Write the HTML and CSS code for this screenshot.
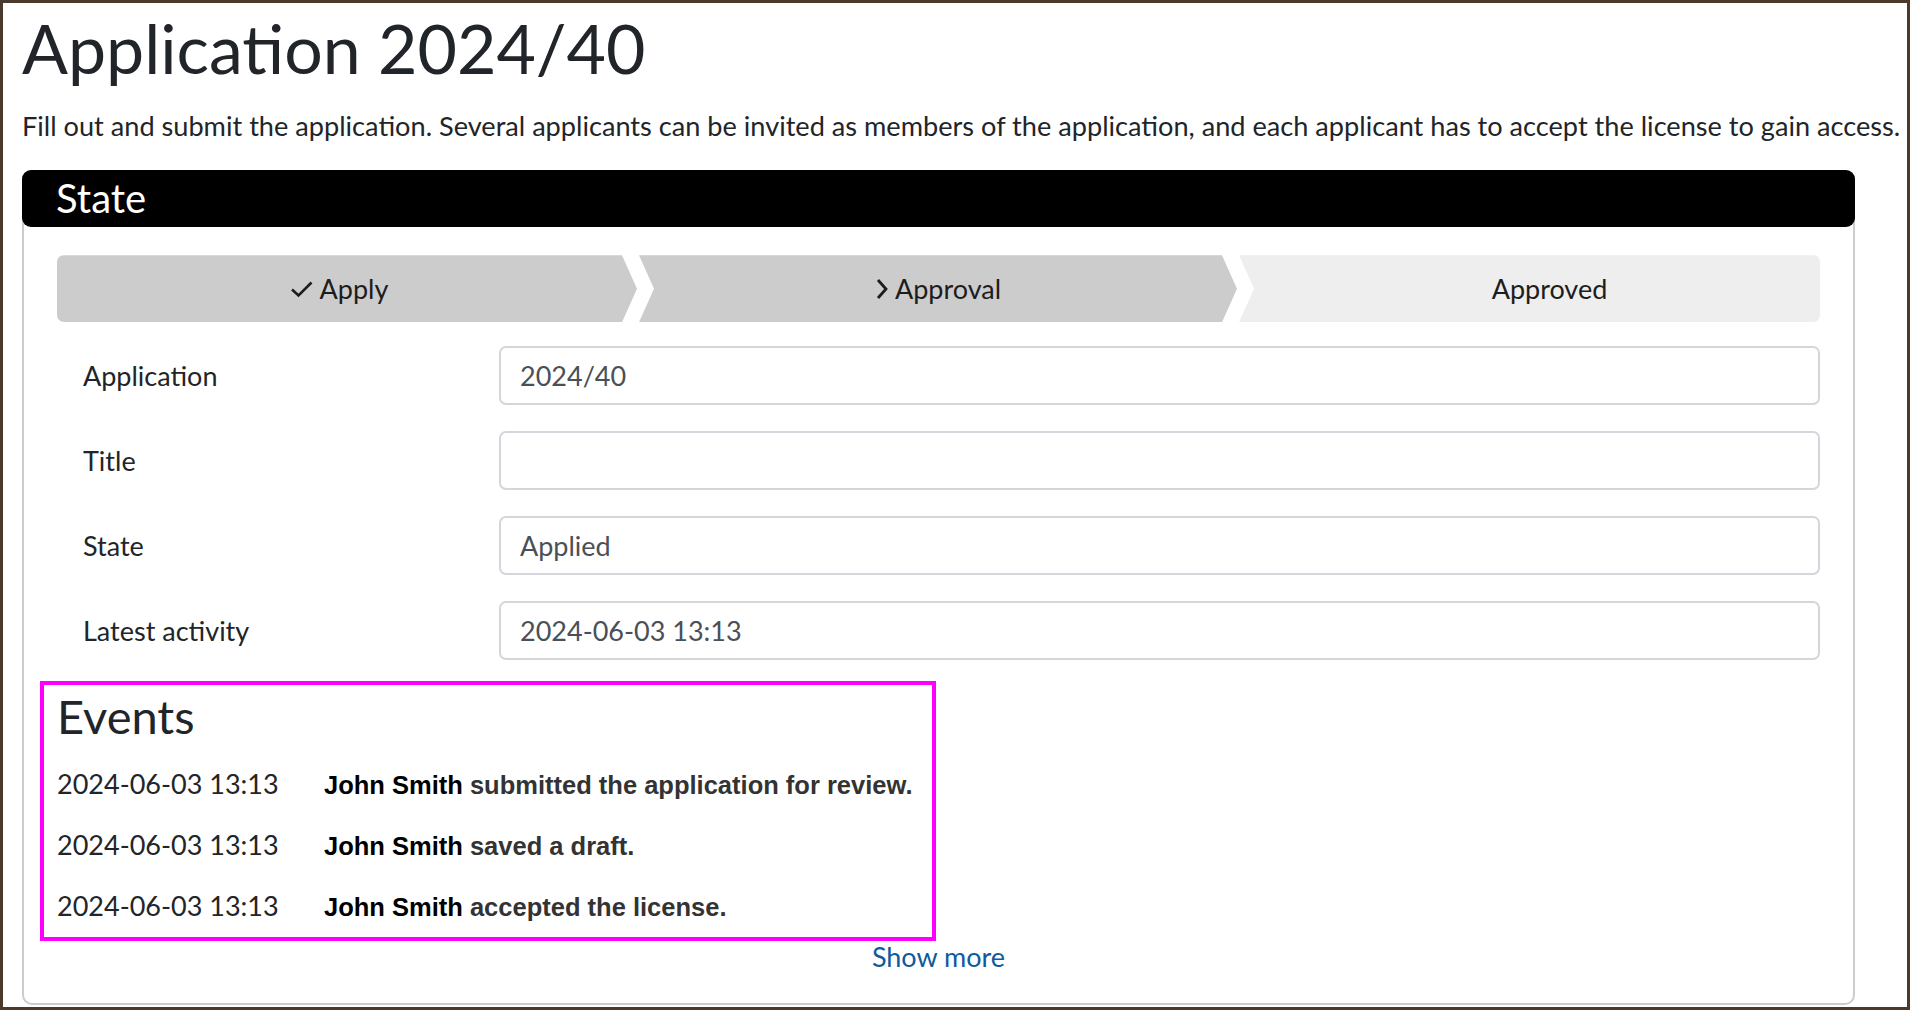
FILE: index.html
```html
<!DOCTYPE html>
<html lang="en">
<head>
<meta charset="utf-8">
<title>Application 2024/40</title>
<link rel="stylesheet" href="styles.css">
</head>
<body>
<div class="frame">
  <h1 class="page-title">Application 2024/40</h1>
  <p class="intro">Fill out and submit the application. Several applicants can be invited as members of the application, and each applicant has to accept the license to gain access.</p>
  <section class="panel">
    <header class="panel-header">State</header>
    <div class="panel-body">
      <ol class="phases">
        <li class="phase done first"><svg class="phase-icon" width="24" height="18" viewBox="0 0 24 18"><path d="M2 9.5 L8.5 15.5 L21.5 2.5" fill="none" stroke="#1d1d1d" stroke-width="2.6"/></svg><span>Apply</span></li>
        <li class="phase active"><svg class="phase-icon" width="14" height="22" viewBox="0 0 14 22"><path d="M3 2 L11 11 L3 20" fill="none" stroke="#1d1d1d" stroke-width="2.8"/></svg><span>Approval</span></li>
        <li class="phase upcoming last"><span>Approved</span></li>
      </ol>
      <div class="fields">
        <div class="field-label">Application</div>
        <div class="field-value">2024/40</div>
        <div class="field-label">Title</div>
        <div class="field-value"></div>
        <div class="field-label">State</div>
        <div class="field-value">Applied</div>
        <div class="field-label">Latest activity</div>
        <div class="field-value">2024-06-03 13:13</div>
      </div>
      <div class="events">
        <h2 class="events-title">Events</h2>
        <div class="event"><span class="event-time">2024-06-03 13:13</span><span class="event-desc"><b>John Smith</b> submitted the application for review.</span></div>
        <div class="event"><span class="event-time">2024-06-03 13:13</span><span class="event-desc"><b>John Smith</b> saved a draft.</span></div>
        <div class="event"><span class="event-time">2024-06-03 13:13</span><span class="event-desc"><b>John Smith</b> accepted the license.</span></div>
      </div>
      <div class="more"><a href="#" class="more-link">Show more</a></div>
    </div>
  </section>
</div>
</body>
</html>
```

FILE: styles.css
```css
html, body {
  margin: 0;
  padding: 0;
  background: #ffffff;
}

body {
  font-family: Lato, "Open Sans", sans-serif;
  color: #212529;
}

.frame {
  position: relative;
  box-sizing: border-box;
  width: 1910px;
  height: 1010px;
  border: 3px solid #4b3a2b;
  padding: 4px 0 0 19px;
  overflow: hidden;
}

.frame::after {
  content: "";
  position: absolute;
  right: -2px;
  top: 169px;
  width: 2px;
  height: 52px;
  background: #111111;
}

.page-title {
  font-size: 68px;
  font-weight: 400;
  line-height: 1.2;
  margin: 0;
}

.intro {
  font-size: 27.15px;
  line-height: 1.5;
  margin: 17px 0 24px;
  white-space: nowrap;
}

.panel {
  box-sizing: border-box;
  width: 1833px;
  border: 2px solid #cccccc;
  border-radius: 10px;
}

.panel-header {
  background: #000000;
  color: #ffffff;
  margin: -2px -2px 0;
  height: 57px;
  border-radius: 9px;
  font-size: 40px;
  line-height: 57px;
  padding-left: 34px;
}

.panel-body {
  padding: 28px 33px 26px;
}

.phases {
  list-style: none;
  margin: 0;
  padding: 0;
  display: grid;
  grid-template-columns: 580px 598px 1fr;
  column-gap: 2px;
  height: 67px;
}

.phase {
  display: flex;
  align-items: center;
  justify-content: center;
  gap: 6px;
  font-size: 27px;
  color: #1d1d1d;
  background: #cccccc;
  clip-path: polygon(0 0, calc(100% - 15px) 0, 100% 50%, calc(100% - 15px) 100%, 0 100%, 15px 50%);
}

.phase.first {
  border-radius: 7px 0 0 7px;
  padding-right: 16px;
  clip-path: polygon(0 0, calc(100% - 15px) 0, 100% 50%, calc(100% - 15px) 100%, 0 100%);
}

.phase.last {
  border-radius: 0 7px 7px 0;
  padding-left: 40px;
  clip-path: polygon(0 0, 100% 0, 100% 100%, 0 100%, 15px 50%);
}

.phase.upcoming {
  background: #eeeeee;
}

.phase-icon {
  display: block;
}

.fields {
  display: grid;
  grid-template-columns: 442px 1fr;
  row-gap: 26px;
  margin-top: 24px;
}

.field-label {
  align-self: center;
  padding-left: 26px;
  font-size: 27px;
}

.field-value {
  box-sizing: border-box;
  height: 59px;
  border: 2px solid #d3d7dc;
  border-radius: 7px;
  padding: 0 19px;
  display: flex;
  align-items: center;
  font-size: 27px;
  color: #495057;
}

.events {
  width: fit-content;
  border: 4px solid #ff00ff;
  margin: 21px 0 0 -17px;
  padding: 3px 20px 0 13px;
}

.events-title {
  font-size: 47px;
  font-weight: 400;
  line-height: 1.2;
  margin: 0 0 9px;
}

.event {
  display: flex;
  align-items: baseline;
  line-height: 60px;
  white-space: nowrap;
}

.event-time {
  width: 267px;
  font-size: 27px;
  color: #212529;
}

.event-desc {
  font-family: "Liberation Sans", Arial, sans-serif;
  font-size: 25.5px;
  font-weight: 700;
  color: #333333;
}

.event-desc b {
  color: #000000;
}

.more {
  text-align: center;
  margin-top: -4px;
  font-size: 27px;
  line-height: 1.5;
}

.more-link {
  color: #0f5a9c;
  text-decoration: none;
}
```
